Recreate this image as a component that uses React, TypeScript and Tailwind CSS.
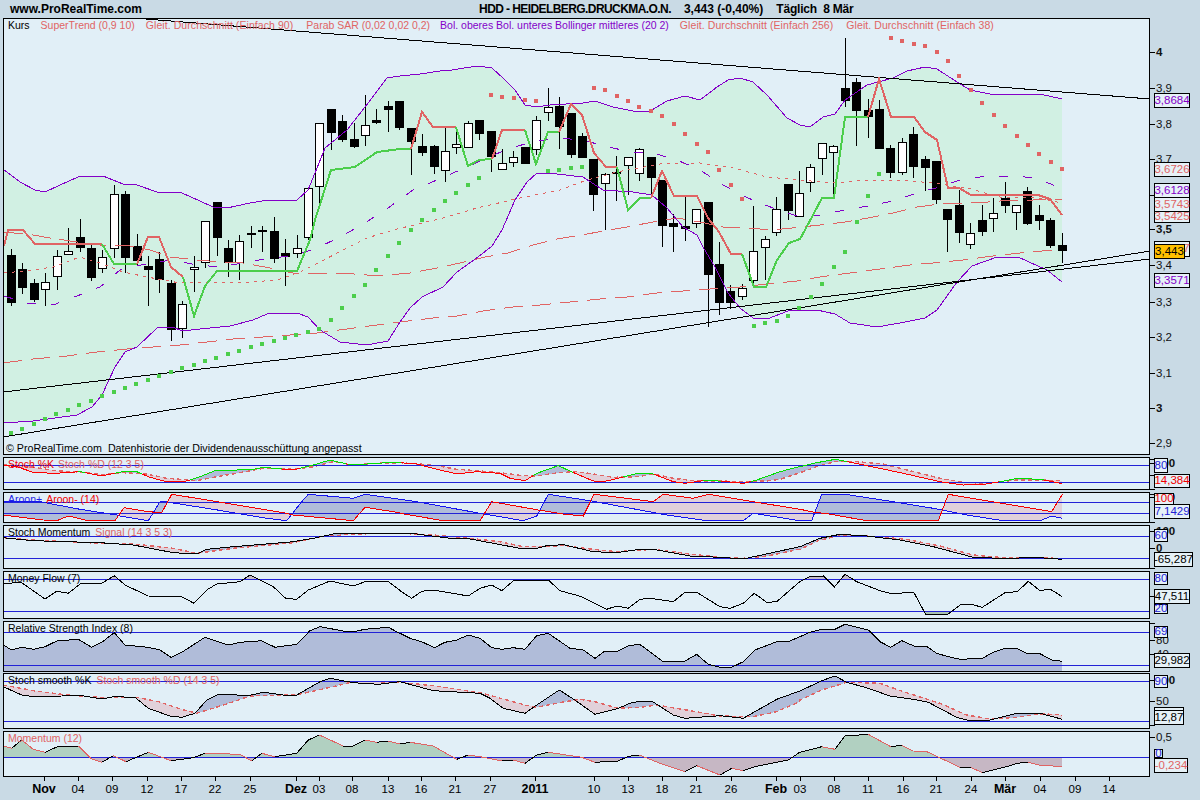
import React from "react";

type P = [number, number];
const z = (ox: number, oy: number, a: number[]): P[] => {
  const r: P[] = [];
  for (let i = 0; i < a.length; i += 2) r.push([ox + a[i] / 3, oy + a[i + 1] / 3]);
  return r;
};
const at = (s: P[], x: number) => {
  if (x <= s[0][0]) return s[0][1];
  for (let i = 1; i < s.length; i++) {
    if (x <= s[i][0]) {
      const [a, b] = s[i - 1];
      const [c, d] = s[i];
      return c === a ? d : b + ((d - b) * (x - a)) / (c - a);
    }
  }
  return s[s.length - 1][1];
};
const pts = (s: P[]) => s.map((p) => `${p[0].toFixed(1)},${p[1].toFixed(1)}`).join(" ");

const RED = "#e06464";
const PURPLE = "#8400c8";
const GREEN = "#4cce4c";
const BLUE = "#2222d6";
const UP = "#b0bcd9";
const DOWN = "#e1d1da";
const X0 = 4;
const XE = 1062.3;

// [column open-top, body-bottom, wick-top, wick-bottom, white?]
const C: [number, number, number, number, number][] = [
  [255,303,249,306,0],[269,288,263,294,0],[283,300,279,302,0],[282,290,273,306,1],[256,277,250,290,1],[251,255,228,255,1],
  [237,248,219,252,0],[248,278,244,281,0],[257,269,250,273,1],[194,249,185,258,1],[194,258,191,273,0],[246,261,234,265,0],
  [266,270,256,306,0],[259,280,252,293,0],[283,330,280,341,0],[304,329,301,338,1],[267,270,256,292,1],[221,263,221,268,1],
  [202,238,202,256,0],[248,263,240,277,0],[241,263,235,280,1],[233,235,226,248,1],[230,232,226,252,0],[231,259,217,263,0],
  [253,257,239,286,0],[248,254,235,258,1],[188,238,188,240,1],[123,187,123,203,1],[109,133,109,150,0],[121,140,115,142,0],
  [139,147,123,148,0],[125,136,95,146,1],[120,123,109,124,0],[106,110,101,132,0],[101,128,101,130,0],[128,142,128,175,0],
  [146,153,134,156,0],[146,167,145,174,0],[151,171,128,182,1],[144,148,131,154,1],[123,148,121,148,1],[120,134,120,140,0],
  [131,157,131,172,0],[163,170,149,170,1],[157,163,151,167,1],[147,164,147,164,0],[120,150,116,155,1],[107,113,88,121,1],
  [106,127,97,149,0],[113,155,113,158,0],[136,158,133,158,0],[159,195,159,211,0],[174,184,173,230,1],[172,174,156,201,1],
  [157,166,157,195,1],[149,174,148,181,1],[157,178,157,195,0],[180,226,180,247,0],[223,227,214,252,0],[226,229,197,241,0],
  [209,224,209,228,1],[202,275,202,327,0],[264,303,242,315,0],[291,303,285,309,0],[288,297,284,300,1],[251,281,206,283,1],
  [239,248,236,280,1],[209,233,197,236,1],[184,211,184,220,0],[193,217,171,217,1],[167,183,164,192,1],[143,159,143,175,1],
  [146,153,145,197,1],[88,101,38,107,0],[82,111,78,146,0],[110,117,99,138,0],[109,149,100,149,0],[148,173,145,178,0],
  [142,173,138,175,1],[134,167,127,178,0],[159,168,156,191,0],[161,200,161,204,0],[209,220,209,252,0],[205,233,190,243,0],
  [233,245,223,249,1],[220,232,205,236,0],[213,219,198,232,1],[198,206,182,213,0],[205,213,205,230,1],[191,224,187,225,0],
  [215,221,205,230,0],[220,246,218,248,0],[245,251,233,263,0],
];
const cx = (i: number) => Math.floor(11.5 + 11.42 * i);

const upper: P[] = [[3,169],[20,182],[35,190],[45,192],[60,185],[78,177],[88,176],[103,176],[123,184],[137,185],[157,192],[182,193],[200,201],[213,207],[227,208],[250,203],[268,200],[297,200],[308,190],[315,173],[325,148],[347,130],[365,107],[387,78],[400,76],[420,74],[440,71],[452,70],[477,66],[492,68],[503,78],[515,90],[525,105],[537,107],[550,105],[583,103],[595,101],[613,107],[633,111],[650,111],[667,101],[685,96],[700,100],[717,87],[728,80],[740,78],[753,82],[767,95],[787,118],[800,125],[810,127],[823,117],[835,114],[845,100],[867,85],[893,78],[907,71],[925,67],[937,69],[957,82],[970,90],[990,94],[1022,94],[1040,94],[1062,99]];
const lower: P[] = [[3,423],[33,421],[77,415],[92,407],[102,395],[115,367],[125,352],[137,347],[157,328],[172,327],[183,331],[200,329],[230,326],[253,320],[267,314],[297,313],[308,317],[320,330],[340,342],[367,345],[388,341],[400,322],[410,308],[422,297],[443,287],[457,272],[478,257],[492,246],[502,230],[515,200],[527,182],[537,173],[557,174],[583,177],[603,190],[633,192],[652,195],[667,208],[683,227],[697,235],[703,247],[715,267],[728,293],[740,308],[753,318],[767,319],[788,311],[800,310],[817,310],[835,314],[850,323],[877,327],[900,323],[925,318],[937,310],[957,282],[972,266],[997,257],[1018,257],[1047,270],[1062,282]];
const middle: P[] = [[4,296],[27,303],[53,305],[77,296],[100,287],[120,270],[150,263],[173,260],[197,265],[220,267],[243,263],[270,258],[293,256],[317,248],[340,237],[365,223],[388,208],[413,190],[437,180],[460,170],[510,148],[533,142],[557,138],[582,140],[605,146],[630,152],[653,153],[677,160],[700,170],[723,185],[748,198],[773,208],[800,217],[820,215],[845,210],[868,206],[893,201],[917,193],[940,187],[963,179],[988,176],[1013,176],[1037,178],[1062,189]];
const ma90: P[] = [[4,273],[33,270],[53,267],[80,257],[100,263],[123,272],[147,277],[180,283],[213,282],[237,283],[277,280],[300,272],[320,262],[343,250],[367,238],[393,230],[443,218],[477,208],[520,198],[560,190],[587,180],[617,172],[660,164],[700,163],[733,168],[767,177],[800,180],[833,183],[867,180],[900,180],[933,183],[967,188],[1000,197],[1033,197],[1062,203]];
const ma38: P[] = [[4,232],[33,235],[50,238],[77,242],[100,245],[125,245],[150,250],[170,257],[197,260],[220,262],[243,263],[270,268],[293,273],[317,273],[340,273],[367,275],[388,275],[410,273],[437,268],[460,263],[485,257],[508,253],[533,245],[557,239],[582,235],[603,231],[627,227],[653,222],[677,218],[700,222],[723,227],[747,228],[773,230],[820,225],[845,222],[868,218],[893,213],[917,207],[940,204],[963,203],[988,202],[1013,200],[1033,200],[1062,199]];
const ma256: P[] = [[3,363],[33,359],[67,356],[97,352],[127,349],[153,347],[180,345],[207,342],[233,339],[263,337],[290,335],[317,333],[347,329],[377,325],[400,322],[433,318],[457,316],[483,311],[513,307],[540,305],[570,302],[600,299],[627,297],[657,293],[683,291],[710,289],[740,287],[767,284],[797,281],[820,277],[850,273],[880,269],[910,265],[933,263],[963,260],[993,256],[1020,253],[1053,250]];

const trend: [string, P[]][] = [
  [RED, [[4,246],[8,230],[23,230],[35,244],[102,244]]],
  [GREEN, [[102,244],[114,264],[137,264]]],
  [RED, [[137,264],[148,237],[159,237],[171,267],[183,277]]],
  [GREEN, [[183,277],[194,316],[205,286],[217,271],[297,271],[310,240],[315,220],[331,170],[355,167],[377,152],[400,149],[411,149]]],
  [RED, [[411,149],[422,112],[433,127],[456,127]]],
  [GREEN, [[456,127],[468,166],[479,160],[492,159]]],
  [RED, [[492,159],[502,130],[525,130]]],
  [GREEN, [[525,130],[536,164],[548,132],[559,132]]],
  [RED, [[559,132],[571,104],[582,115],[594,153],[606,167],[617,167]]],
  [GREEN, [[617,167],[628,210],[640,198],[651,198]]],
  [RED, [[651,198],[662,171],[674,196],[697,196],[708,218],[719,232],[731,254],[742,254]]],
  [GREEN, [[742,254],[754,287],[766,287],[777,260],[789,243],[800,239],[805,230],[822,198],[834,198],[845,117],[868,117]]],
  [RED, [[868,117],[879,79],[891,117],[914,117],[925,132],[937,140],[948,188],[959,188],[971,195],[1038,195],[1050,199],[1062,215]]],
];
const sarG: P[] = [[11,433],[22,429],[34,424],[45,419],[56,414],[68,410],[79,405],[91,401],[102,396],[114,392],[125,388],[136,384],[148,380],[159,376],[171,372],[182,368],[194,365],[205,361],[216,358],[228,354],[239,351],[251,347],[262,344],[274,341],[285,338],[296,335],[308,332],[319,329],[331,320],[342,308],[354,296],[365,285],[376,270],[388,256],[399,243],[411,230],[422,220],[434,210],[445,201],[456,193],[468,185],[479,178],[548,171],[559,170],[571,168],[582,167],[754,326],[765,323],[777,321],[788,316],[799,308],[811,297],[822,284],[834,267],[845,252],[857,222],[868,196],[879,174]];
const sarR: P[] = [[491,95],[502,97],[514,98],[525,100],[536,101],[594,88],[605,90],[617,96],[628,101],[639,107],[651,111],[662,116],[674,124],[685,134],[697,144],[708,152],[719,170],[731,185],[742,199],[891,38],[902,41],[914,44],[925,46],[937,52],[948,61],[959,76],[971,90],[982,103],[994,115],[1005,126],[1017,136],[1028,145],[1039,154],[1051,162],[1062,169]];

const stK = [...z(0,450,[10,45,50,50,100,67,165,70,240,65,305,78,370,65,410,65,450,82,500,95,560,93,600,80,650,60,710,60,760,58,790,52,880,60,940,45,990,30,1040,42,1100,42,1160,38,1199,38]),...z(400,450,[0,38,50,42,100,55,170,72,230,65,300,70,330,85,375,92,410,70,475,47,530,72,580,93,620,93,660,83,715,70,760,72,820,95,855,100,910,92,960,93,1030,100,1070,90,1140,65,1199,50]),...z(800,450,[0,50,50,38,105,28,200,47,300,68,420,95,490,105,560,102,620,92,650,85,720,88,780,100,787,100])];
const stD = [...z(0,450,[10,45,60,47,100,52,165,62,240,66,305,74,370,68,440,72,500,85,540,88,590,92,650,80,710,70,790,55,880,58,940,50,1000,35,1060,45,1130,40,1199,38]),...z(400,450,[0,38,100,45,170,58,230,62,300,68,370,77,410,78,475,68,530,65,580,72,640,82,715,80,760,72,820,85,880,92,960,93,1030,95,1100,93,1140,88,1199,68]),...z(800,450,[0,68,50,50,105,35,170,35,250,42,320,60,420,85,490,97,560,100,650,90,720,90,787,92])];
const arP = [...z(0,450,[10,155,120,155,240,178,350,195,360,198,445,212,480,155,495,155,640,178,800,205,860,212,905,155,925,133,1060,145,1095,133,1199,148]),...z(400,450,[0,148,50,155,240,190,370,212,410,198,445,133,570,152,800,195,920,212,1030,212,1060,190,1199,212]),...z(800,450,[0,212,35,212,65,133,135,133,260,152,400,175,500,195,610,212,720,212,755,198,787,205])];
const arM = [...z(0,450,[10,195,130,210,170,212,205,198,265,212,345,212,372,173,445,185,485,188,515,133,640,153,850,188,880,195,1060,212,1095,172,1199,188]),...z(400,450,[0,190,130,212,240,212,275,155,415,180,490,192,550,198,582,133,760,155,790,133,880,145,925,133,1060,155,1199,178]),...z(800,450,[0,178,50,188,75,190,200,212,415,212,445,133,755,185,787,133])];
const smo = [...z(0,450,[10,263,100,272,300,278,400,285,520,308,590,312,620,298,700,290,880,275,940,265,1010,250,1199,250]),...z(400,450,[0,250,50,252,150,265,200,265,370,297,410,295,440,287,490,284,580,305,650,308,720,298,760,298,870,318,960,322,1030,327,1199,290]),...z(800,450,[0,290,60,265,120,253,200,258,300,270,400,290,520,322,600,325,720,323,787,328])];
const sig = [...z(0,450,[10,263,100,270,300,280,400,282,520,295,590,310,700,295,880,278,950,262,1060,252,1199,250]),...z(400,450,[0,250,100,255,200,264,300,275,370,290,490,287,580,298,650,305,760,298,870,312,960,322,1030,325,1100,318,1199,298]),...z(800,450,[0,298,60,270,120,257,200,258,320,268,420,288,520,315,610,323,787,325])];
const mf = [...z(0,450,[10,400,65,398,135,447,170,424,205,430,240,402,305,400,343,377,375,405,445,438,545,440,582,460,620,420,650,402,720,395,750,375,820,410,857,445,890,448,925,420,990,393,1060,408,1095,395,1165,395,1199,420]),...z(400,450,[0,422,35,445,65,424,100,420,205,438,240,415,275,405,305,422,343,390,430,390,445,390,480,422,545,440,620,478,650,468,685,475,720,448,750,445,820,455,855,427,890,427,960,470,990,475,1030,460,1063,430,1100,457,1130,455,1199,395]),...z(800,450,[0,395,30,380,70,378,103,411,135,373,170,395,240,422,270,430,342,428,378,495,445,492,480,465,510,462,547,472,615,428,652,425,685,394,720,422,750,417,787,440])];
const rsi = [...z(0,620,[10,75,35,90,65,82,100,88,135,80,170,63,235,58,275,82,305,67,343,38,375,75,445,82,480,90,513,112,545,97,615,52,685,75,720,67,785,62,825,82,890,73,930,32,960,20,1030,33,1060,35,1095,28,1165,22,1199,40]),...z(400,620,[0,40,30,55,65,65,103,83,135,67,170,60,205,45,240,55,275,83,305,88,340,83,375,88,410,47,445,40,510,85,550,90,585,115,615,93,655,93,685,78,718,72,787,123,855,123,890,103,925,133,960,142,995,142,1030,125,1065,90,1130,65,1165,65,1199,50]),...z(800,620,[0,50,30,37,65,28,105,28,135,13,205,30,240,65,272,82,305,62,342,78,378,78,410,100,445,110,480,118,547,115,580,97,615,85,650,85,685,102,718,100,755,120,787,124])];
const smK = [...z(0,620,[10,200,65,225,100,230,185,228,235,225,305,237,340,230,405,232,445,265,510,288,545,292,585,280,620,240,650,225,680,222,740,228,790,217,850,225,890,225,960,185,990,175,1060,188,1135,193,1199,185]),...z(400,620,[0,185,100,212,240,220,270,235,310,265,375,280,410,255,478,210,520,237,585,283,655,265,690,250,720,243,755,243,820,285,855,295,960,287,1030,295,1130,238,1199,213]),...z(800,620,[0,213,65,182,105,168,140,187,205,205,270,228,340,238,385,247,470,292,500,300,570,300,650,280,720,280,787,298])];
const smD = [...z(0,620,[10,195,100,212,200,225,305,232,410,232,475,245,545,268,590,280,680,252,750,228,850,225,900,222,1000,200,1060,185,1130,185,1199,188]),...z(400,620,[0,187,100,197,240,218,375,255,410,262,478,248,540,238,585,245,655,265,720,262,770,255,860,270,960,288,1060,290,1130,275,1199,245]),...z(800,620,[0,240,65,210,105,198,140,187,240,190,310,215,420,250,500,285,570,297,650,292,720,282,760,283,787,285])];
const mom = [...z(0,620,[10,378,35,385,65,360,100,388,135,397,170,381,235,378,275,417,305,427,340,407,378,425,445,397,513,422,580,413,615,400,720,403,755,423,785,400,825,410,890,400,925,360,958,345,1030,378,1060,378,1095,360,1130,367,1165,363,1199,372]),...z(400,620,[0,372,30,367,100,378,130,395,170,418,205,405,240,410,305,423,340,420,375,430,410,405,445,397,545,412,585,427,655,423,685,409,718,405,785,432,855,455,890,437,960,465,995,445,1030,452,1065,440,1165,420,1199,397]),...z(800,620,[0,397,65,380,105,388,135,348,205,343,272,380,305,376,340,393,378,394,480,442,512,442,547,458,620,440,650,430,685,427,718,435,787,440])];

const runs = (a: P[], b: P[] | number) => {
  const out: { up: boolean; x: number[] }[] = [];
  for (let x = X0; x <= XE; x++) {
    const va = at(a, x);
    const vb = typeof b === "number" ? b : at(b, x);
    const up = va <= vb;
    const last = out[out.length - 1];
    if (last && last.up === up) last.x.push(x);
    else {
      if (last) last.x.push(x);
      out.push({ up, x: [x] });
    }
  }
  return out;
};
const Between = ({ a, b, up = UP, down = DOWN, only }: { a: P[]; b: P[] | number; up?: string; down?: string; only?: "up" | "down" }) => (
  <>
    {runs(a, b).map((r, i) => {
      if (only === "up" && !r.up) return null;
      if (only === "down" && r.up) return null;
      const top = r.x.map((x) => [x, at(a, x)] as P);
      const bot = r.x.slice().reverse().map((x) => [x, typeof b === "number" ? b : at(b, x)] as P);
      return <polygon key={i} points={pts([...top, ...bot])} fill={r.up ? up : down} stroke="none" />;
    })}
  </>
);
const ByRun = ({ a, b, up, down }: { a: P[]; b: P[]; up: string; down: string }) => (
  <>
    {runs(a, b).map((r, i) => (
      <polyline key={i} points={pts(r.x.map((x) => [x, at(a, x)] as P))} fill="none" stroke={r.up ? up : down} strokeWidth={1} />
    ))}
  </>
);
const L = ({ p, c, w = 1, d }: { p: P[]; c: string; w?: number; d?: string }) => (
  <polyline points={pts(p)} fill="none" stroke={c} strokeWidth={w} strokeDasharray={d} />
);
const Dashed = ({ p }: { p: P[] }) => <L p={p} c={RED} w={1.4} d="4 3" />;
const HL = ({ y }: { y: number }) => <line x1={4} x2={1149} y1={y + 0.5} y2={y + 0.5} stroke={BLUE} strokeWidth={1} />;

type Tag = { y: number; t: string; c: string; w?: number; h?: number; bg?: string };
type Mark = { y: number; t?: string; bold?: boolean };

const Tags = ({ top, tags }: { top: number; tags: Tag[] }) => (
  <>
    {tags.map((g, i) => (
      <div
        key={i}
        className="absolute left-[4px] z-10 flex items-center justify-center border border-black text-[11.5px] leading-none"
        style={{ top: g.y - top, width: g.w ?? 36, height: g.h ?? 15, color: g.c, background: g.bg ?? "#e6f1f7" }}
      >
        {g.t}
      </div>
    ))}
  </>
);
const Axis = ({ top, marks, tags }: { top: number; marks: Mark[]; tags: Tag[] }) => (
  <div className="relative w-[50px]">
    {marks.map((m, i) => (
      <React.Fragment key={i}>
        <div className="absolute left-0 h-px w-[5px] bg-black" style={{ top: m.y - top }} />
        {m.t && (
          <span
            className={`absolute left-[6px] text-[11.5px] leading-[14px] text-[#111] ${m.bold ? "font-bold" : ""}`}
            style={{ top: m.y - top - 7 }}
          >
            {m.t}
          </span>
        )}
      </React.Fragment>
    ))}
    <Tags top={top} tags={tags} />
  </div>
);

const Panel = ({ top, h, mt, marks, tags, children, label }: { top: number; h: number; mt: string; marks: Mark[]; tags: Tag[]; children: React.ReactNode; label: React.ReactNode }) => (
  <div className={`flex pl-[3px] ${mt}`} style={{ height: h }}>
    <div className="relative w-[1147px] border border-black bg-[#e1eff7]">
      <svg className="block h-full w-full" viewBox={`4 ${top + 1} 1145 ${h - 2}`} shapeRendering="crispEdges">
        {children}
      </svg>
      <div className="absolute left-[4px] top-0 flex text-[10.5px] leading-[13px]">{label}</div>
    </div>
    <Axis top={top} marks={marks} tags={tags} />
  </div>
);

const dates: [string, number, boolean][] = [
  ["Nov",44,true],["04",78,false],["09",112,false],["12",147,false],["17",181,false],["22",215,false],["25",250,false],["Dez",296,true],["03",319,false],["08",352,false],["13",388,false],["16",421,false],["21",455,false],["27",490,false],["2011",535,true],["10",594,false],["13",628,false],["18",662,false],["21",696,false],["26",731,false],["Feb",776,true],["03",800,false],["08",834,false],["11",868,false],["16",903,false],["21",936,false],["24",971,false],["Mär",1005,true],["04",1040,false],["09",1075,false],["14",1109,false],
];

export default function App() {
  return (
    <div className="flex h-[800px] w-[1200px] flex-col overflow-hidden bg-[#c9dae5] font-['Liberation_Sans',Arial,sans-serif] text-black">
      <div className="flex h-[18px] items-center pl-[10px] text-[12px] font-bold leading-none">
        <span>www.ProRealTime.com</span>
        <span className="ml-[337px] tracking-[-0.58px]">HDD - HEIDELBERG.DRUCKMA.O.N.</span>
        <span className="ml-[13px]">3,443 (-0,40%)</span>
        <span className="ml-[13px] tracking-[-0.2px]">Täglich&nbsp; 8 Mär</span>
      </div>

      <Panel
        top={18}
        h={437}
        mt="mt-0"
        marks={[
          { y: 52, t: "4", bold: true },{ y: 88, t: "3,9" },{ y: 124, t: "3,8" },{ y: 159, t: "3,7" },{ y: 195, t: "3,6" },{ y: 229, t: "3,5", bold: true },{ y: 265, t: "3,4" },{ y: 302, t: "3,3" },{ y: 337, t: "3,2" },{ y: 373, t: "3,1" },{ y: 408, t: "3", bold: true },{ y: 443, t: "2,9" },
        ]}
        tags={[
          { y: 93, t: "3,8684", c: PURPLE },
          { y: 162, t: "3,6726", c: RED },
          { y: 183, t: "3,6128", c: PURPLE },
          { y: 197, t: "3,5743", c: RED },
          { y: 211, t: "3,5425", c: RED, h: 12 },
          { y: 241, t: "3,4427", c: RED, h: 16 },
          { y: 244, t: "3,443", c: "#000", w: 31, bg: "#ffc000" },
          { y: 273, t: "3,3571", c: PURPLE },
        ]}
        label={
          <div className="flex whitespace-nowrap">
            <span className="text-black">Kurs</span>
            <span className="ml-[11px] text-[#e06464]">SuperTrend (0,9 10)</span>
            <span className="ml-[11px] tracking-[0.07px] text-[#e06464]">Gleit. Durchschnitt (Einfach 90)</span>
            <span className="ml-[13px] text-[#e06464]">Parab SAR (0,02 0,02 0,2)</span>
            <span className="ml-[10px] text-[#8400c8]">Bol. oberes Bol. unteres Bollinger mittleres (20 2)</span>
            <span className="ml-[11px] tracking-[0.07px] text-[#e06464]">Gleit. Durchschnitt (Einfach 256)</span>
            <span className="ml-[13px] tracking-[0.07px] text-[#e06464]">Gleit. Durchschnitt (Einfach 38)</span>
          </div>
        }
      >
        <polygon points={pts([...upper, ...lower.slice().reverse()])} fill="#d1f0e3" stroke="none" />
        {C.map((c, i) => {
          const x = cx(i);
          return (
            <g key={i}>
              <rect x={x} y={c[2]} width={1} height={c[3] - c[2]} fill="#000" />
              {c[4] ? (
                <rect x={x - 3.5} y={c[0] + 0.5} width={8} height={c[1] - c[0] - 1} fill="#fff" stroke="#000" strokeWidth={1} />
              ) : (
                <rect x={x - 4} y={c[0]} width={9} height={c[1] - c[0]} fill="#000" />
              )}
            </g>
          );
        })}
        <L p={ma256} c={RED} d="19 9" />
        <L p={ma38} c={RED} d="19 9" />
        <L p={ma90} c={RED} d="3 5" />
        <L p={middle} c={PURPLE} d="9 15" />
        <L p={upper} c={PURPLE} />
        <L p={lower} c={PURPLE} />
        <L p={[[133,18],[1150,99]]} c="#000" />
        <L p={[[3,392],[1150,259]]} c="#000" />
        <L p={[[3,437],[1150,251]]} c="#000" />
        {trend.map(([c, p], i) => <L key={i} p={p} c={c} w={2} />)}
        {sarG.map((p, i) => <rect key={i} x={p[0] - 2} y={p[1] - 2} width={4} height={4} fill={GREEN} />)}
        {sarR.map((p, i) => <rect key={i} x={p[0] - 2} y={p[1] - 2} width={4} height={4} fill={RED} />)}
      </Panel>
      <div className="pointer-events-none relative z-10 -mt-[13px] h-[13px] pl-[6px] text-[10.7px] leading-[13px]">© ProRealTime.com&nbsp; Datenhistorie der Dividendenausschüttung angepasst</div>

      <Panel
        top={457}
        h={33}
        mt="mt-[2px]"
        marks={[{ y: 459 }, { y: 475 }, { y: 489 }, { y: 463, t: "100", bold: true }]}
        tags={[{ y: 458, t: "80", c: BLUE, w: 14 }, { y: 474, t: "14,384", c: "#f00000", h: 14 }]}
        label={<><span className="text-[#f00000]">Stoch %K</span><span className="ml-[4px] text-[#e06464]">Stoch %D (12 3 5)</span></>}
      >
        <Between a={stK} b={stD} />
        <Dashed p={stD} />
        <HL y={465} /><HL y={482} />
        <ByRun a={stK} b={stD} up="#00e000" down="#ff0000" />
      </Panel>

      <Panel
        top={492}
        h={31}
        mt="mt-[2px]"
        marks={[{ y: 494 }, { y: 522 }, { y: 497, t: "100", bold: true }]}
        tags={[{ y: 493, t: "100", c: "#f00000", w: 20, h: 12 }, { y: 504, t: "7,1429", c: BLUE }]}
        label={<><span className="text-[#2222e6]">Aroon+</span><span className="ml-[4px] text-[#f00000]">Aroon- (14)</span></>}
      >
        <Between a={arP} b={arM} />
        <HL y={502} /><HL y={513} />
        <L p={arP} c="#1515f0" />
        <L p={arM} c="#f40000" />
      </Panel>

      <Panel
        top={525}
        h={44}
        mt="mt-[2px]"
        marks={[{ y: 531, t: "100", bold: true }, { y: 548, t: "0", bold: true }, { y: 568 }]}
        tags={[{ y: 529, t: "60", c: BLUE, w: 14, h: 13 }, { y: 552, t: "-65,287", c: "#000", w: 39 }]}
        label={<><span>Stoch Momentum</span><span className="ml-[5px] text-[#e06464]">Signal (14 3 5 3)</span></>}
      >
        <Between a={smo} b={sig} />
        <Dashed p={sig} />
        <HL y={536} /><HL y={558} />
        <L p={smo} c="#000" />
      </Panel>

      <Panel
        top={571}
        h={48}
        mt="mt-[2px]"
        marks={[{ y: 596 }]}
        tags={[{ y: 572, t: "80", c: BLUE, w: 14, h: 13 }, { y: 604, t: "20", c: BLUE, w: 14, h: 10 }, { y: 589, t: "47,511", c: "#000" }]}
        label={<span>Money Flow (7)</span>}
      >
        <Between a={mf} b={579} up="#c3bcc6" only="up" />
        <Between a={mf} b={611} down="#a9c4b0" only="down" />
        <HL y={579} /><HL y={611} />
        <L p={mf} c="#000" />
      </Panel>

      <Panel
        top={621}
        h={51}
        mt="mt-[2px]"
        marks={[{ y: 623 }, { y: 640, t: "80" }, { y: 654, t: "40" }]}
        tags={[{ y: 626, t: "69", c: BLUE, w: 14, h: 12 }, { y: 653, t: "29,982", c: "#000" }]}
        label={<span>Relative Strength Index (8)</span>}
      >
        <Between a={rsi} b={680} up={UP} only="up" />
        <HL y={632} /><HL y={665} />
        <L p={rsi} c="#000" />
      </Panel>

      <Panel
        top={673}
        h={56}
        mt="mt-[1px]"
        marks={[{ y: 680, t: "100", bold: true }, { y: 701, t: "50" }, { y: 725 }]}
        tags={[{ y: 675, t: "90", c: BLUE, w: 14, h: 13 }, { y: 707, t: "", c: "#000", w: 30, h: 4 }, { y: 710, t: "12,87", c: "#000", w: 30 }]}
        label={<><span>Stoch smooth %K</span><span className="ml-[5px] text-[#e06464]">Stoch smooth %D (14 3 5)</span></>}
      >
        <Between a={smK} b={smD} />
        <Dashed p={smD} />
        <HL y={681} /><HL y={721} />
        <L p={smK} c="#000" />
      </Panel>

      <Panel
        top={731}
        h={46}
        mt="mt-[2px]"
        marks={[{ y: 737, t: "0,5" }]}
        tags={[{ y: 749, t: "0", c: BLUE, w: 9, h: 9 }, { y: 758, t: "-0,234", c: RED, w: 34 }]}
        label={<span className="text-[#e06464]">Momentum (12)</span>}
      >
        <Between a={mom} b={757} up="#b1d0c1" down="#c6b7c4" />
        <HL y={757} />
        {mom.slice(1).map((p, i) => (
          <L key={i} p={[mom[i], p]} c={p[1] > mom[i][1] ? RED : "#000"} />
        ))}
      </Panel>

      <div className="flex pl-[3px]">
        <div className="relative h-[23px] w-[1147px]">
          {dates.map(([t, x, b], i) => (
            <React.Fragment key={i}>
              <div className="absolute top-0 h-[4px] w-px bg-black" style={{ left: x - 3 }} />
              <span
                className={`absolute top-[5px] w-[40px] text-center leading-[14px] ${b ? "text-[12.5px] font-bold" : "text-[11.5px]"}`}
                style={{ left: x - 23 }}
              >
                {t}
              </span>
            </React.Fragment>
          ))}
        </div>
      </div>
    </div>
  );
}
